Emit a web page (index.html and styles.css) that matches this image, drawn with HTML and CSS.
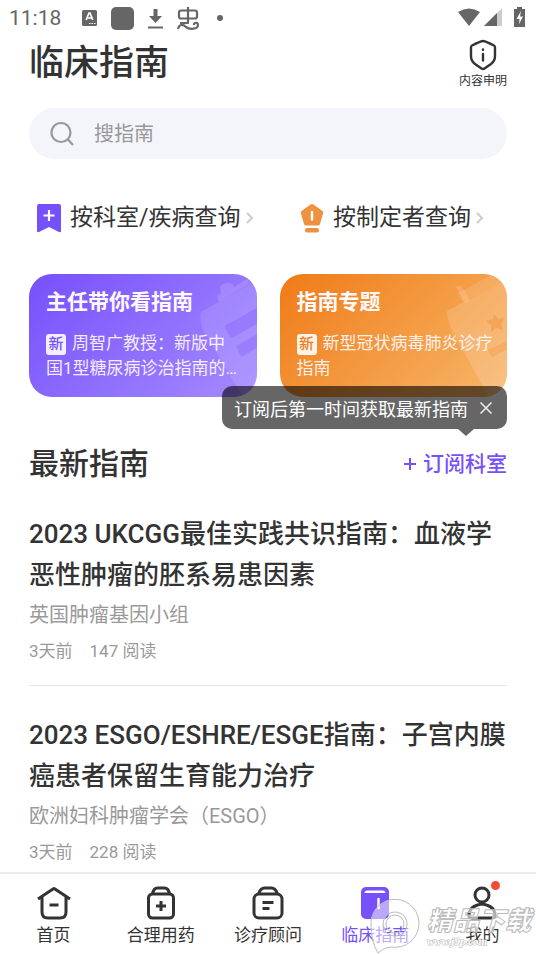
FILE: index.html
```html
<!DOCTYPE html>
<html lang="zh-CN">
<head>
<meta charset="utf-8">
<meta name="viewport" content="width=device-width, initial-scale=1">
<title>临床指南</title>
<link rel="stylesheet" href="styles.css">
</head>
<body>
<div class="app">
  <div class="status">
    <span class="clock">11:18</span>
    <svg class="status-left" width="144" height="24" viewBox="0 0 144 24">
      <rect x="1" y="4" width="15" height="16" rx="1.5" fill="#666"/>
      <path d="M5.200 14 8 7h1l2.800 7M6.200 12h4.500" fill="none" stroke="#fff" stroke-width="1.700"/>
      <path d="M8 17.500h1.500M10.500 17.500H12M13 17.500h1.500" stroke="#fff"/>
      <rect x="30" y="1" width="23" height="23" rx="5" fill="#666"/>
      <path d="M72.500 3h4v7h4.500l-6.500 7-6.500-7h4.500z" fill="#666"/>
      <path d="M67 21.500h15" stroke="#666" stroke-width="2"/>
      <path d="M100 4.500h14q2 0 2 2v4q0 2-2 2h-14q-2 0-2-2v-4q0-2 2-2zM107 1v16H99M97 23c1-5 5-5 8-2 4 3 12 2 12-2 0-3-4-3-4 0" fill="none" stroke="#666" stroke-width="2.200" stroke-linejoin="round"/>
      <circle cx="139" cy="12" r="3" fill="#666"/>
    </svg>
    <svg class="status-right" width="70" height="22" viewBox="0 0 70 22">
      <path d="M1 5Q12-2 23 5L12 19z" fill="#666"/>
      <path d="M45 1v18H27z" fill="#ccc"/><path d="M40 6v13H27z" fill="#666"/>
      <path d="M57 2h3V0h5v2h3v18H57z" fill="#666"/><path d="m64 4-4.500 8h3l-.500 5 4-7.500h-3z" fill="#fff"/>
    </svg>
  </div>
  <main class="content">
    <header class="head">
      <h1>临床指南</h1>
      <a class="notice" href="#notice">
        <svg width="28" height="32" viewBox="0 0 28 32" fill="none" stroke="#333" stroke-width="2.400" stroke-linejoin="round" stroke-linecap="round">
          <path d="M14 2Q16 2 25 6.500Q26 7 26 8.500V17Q26 22 22 25L15.500 29.500Q14 30.500 12.500 29.500L6 25Q2 22 2 17V8.500Q2 7 3 6.500Q12 2 14 2z"/>
          <path d="M14 15v6.500M14 10.500v.200"/>
        </svg>
        <span>内容申明</span>
      </a>
    </header>
    <label class="search">
      <svg width="26" height="26" viewBox="0 0 26 26" fill="none" stroke="#999" stroke-width="2.200"><circle cx="12" cy="11.500" r="9.500"/><path d="m18.500 18 5.500 6"/></svg>
      <input type="search" placeholder="搜指南" aria-label="搜指南">
    </label>
    <nav class="queries">
      <a href="#department">
        <svg width="26" height="30" viewBox="0 0 26 30"><path d="M3 1h20q2 0 2 2v25q0 2-2 1l-10-5-10 5q-2 1-2-1V3q0-2 2-2z" fill="#7650fb"/><path d="M13 7v11M7.500 12.500h11" stroke="#fff" stroke-width="2.200"/></svg>
        <span>按科室/疾病查询</span>
        <svg class="chevron" width="8" height="12" viewBox="0 0 8 12"><path d="m1 1 5 5-5 5"/></svg>
      </a>
      <a href="#author">
        <svg width="26" height="30" viewBox="0 0 26 30"><path d="M11.500 1.500q1.500-1 3 0L23.500 8q1 1 .700 2L21 21q-.300 1.500-2 1.500H7q-1.700 0-2-1.500L1.800 10q-.300-1 .700-2z" fill="#ee9140"/><path d="M13 9v7.500" stroke="#fff" stroke-width="2.400" stroke-linecap="round"/><rect x="6" y="25" width="14" height="4.500" rx="2" fill="#ee9140"/></svg>
        <span>按制定者查询</span>
        <svg class="chevron" width="8" height="12" viewBox="0 0 8 12"><path d="m1 1 5 5-5 5"/></svg>
      </a>
    </nav>
    <section class="cards">
      <a class="card purple" href="#director">
        <svg class="art" width="80" height="123" viewBox="0 0 80 123">
          <path d="M24 38 80 6v117H66L26 56q-4-12-2-18z" fill="#fff" opacity=".12"/>
          <path d="m40 22 4-3q-3-9 5-10 6-1 8 4l13-8 3 4-31 19z" fill="#fff" opacity=".14"/>
          <path d="m49 51 31-17v16L56 63q-2 1-3-1l-5-8q-1-2 1-3z" fill="#7650fb" opacity=".28"/>
          <path d="m61 71 19-11v14l-14 8q-2 1-3-1l-3-7q-1-2 1-3z" fill="#7650fb" opacity=".28"/>
        </svg>
        <h2>主任带你看指南</h2>
        <p><span class="tag">新</span>周智广教授：新版中国1型糖尿病诊治指南的…</p>
      </a>
      <a class="card orange" href="#topics">
        <svg class="art" width="80" height="123" viewBox="0 0 80 123">
          <path d="M20 37 80 5v118H62L24 55q-4-12-4-18z" fill="#fff" opacity=".16"/>
          <path d="M30 20 66 0h14v5L36 28z" fill="#fff" opacity=".12"/>
          <path d="m29 13 5-2 9 16-5 2z" fill="#fff" opacity=".15"/>
          <path d="m67 40 4 5 6-1-3 6 2 6-7-2-5 4v-7l-5-4 7-2z" fill="#ee7d1d" opacity=".3"/>
          <path d="m61 76 19-9v8l-14 8q-2 0-3-2z" fill="#ee7d1d" opacity=".2"/>
        </svg>
        <h2>指南专题</h2>
        <p><span class="tag">新</span>新型冠状病毒肺炎诊疗指南</p>
      </a>
    </section>
    <section class="latest">
      <div class="latest-head">
        <h2>最新指南</h2>
        <div class="subscribe">
          <div class="tip"><span>订阅后第一时间获取最新指南</span>
            <button type="button" aria-label="关闭"><svg width="14" height="14" viewBox="0 0 14 14"><path d="m1.500 1.500 11 11m0-11-11 11" stroke="#eee" stroke-width="1.500"/></svg></button>
          </div>
          <a href="#subscribe"><svg width="14" height="14" viewBox="0 0 14 14"><path d="M7 1v12M1 7h12" stroke="#7650fb" stroke-width="2"/></svg>订阅科室</a>
        </div>
      </div>
      <article>
        <h3>2023 UKCGG最佳实践共识指南：血液学恶性肿瘤的胚系易患因素</h3>
        <p class="org">英国肿瘤基因小组</p>
        <p class="meta"><span>3天前</span><span>147 阅读</span></p>
      </article>
      <article>
        <h3>2023 ESGO/ESHRE/ESGE指南：子宫内膜癌患者保留生育能力治疗</h3>
        <p class="org">欧洲妇科肿瘤学会（ESGO）</p>
        <p class="meta"><span>3天前</span><span>228 阅读</span></p>
      </article>
    </section>
  </main>
  <nav class="tabs">
    <a href="#home"><svg viewBox="0 0 36 36"><path d="M2 14 17 4q1-.700 2 0l15 10M6 12v15q0 6 6 6h12q6 0 6-6V12M13.500 20h9"/></svg><span>首页</span></a>
    <a href="#drugs"><svg viewBox="0 0 36 36"><rect x="5.500" y="9" width="25" height="24" rx="4"/><path d="M9.500 9q1-6 5-6h7q4 0 5 6M18 16v10M13 21h10"/></svg><span>合理用药</span></a>
    <a href="#consult"><svg viewBox="0 0 36 36"><rect x="4" y="9" width="28" height="24" rx="5"/><path d="M8.500 9q2-6 6-6h7q4 0 6 6M12.500 17.500h11M12.500 23.500h7"/></svg><span>诊疗顾问</span></a>
    <a class="active" href="#guides"><svg viewBox="0 0 36 36"><rect x="4" y="2" width="28" height="32" rx="5" fill="#7650fb" stroke="none"/><path d="M7.500 8q0-2.500 3-2.500h15q3 0 3 2.500z" fill="#fff" stroke="none"/><path d="M21.500 14v9" stroke="#fff" stroke-width="2.500" stroke-linecap="round"/></svg><span>临床指南</span></a>
    <a href="#mine"><svg viewBox="0 0 36 36"><circle cx="18" cy="10" r="7"/><path d="M5 32q-1-11 13-13 14 2 13 13-1 1-3 1H8q-2 0-3-1z"/></svg><i class="dot"></i><span>我的</span></a>
  </nav>
  <div class="watermark">
    <svg width="52" height="56" viewBox="0 0 52 56"><path fill-rule="evenodd" d="M9 55Q2 44 2 26A24 24 0 1 1 22 49Q15 49 9 55zM26 14a12 12 0 1 0 .1 0z" fill="#fff" fill-opacity=".5" stroke="#bbb"/><circle cx="26" cy="26" r="9" fill="none" stroke="#bbb"/></svg>
    <div><b>精品下载</b><small>www.j9p.com</small></div>
  </div>
</div>
</body>
</html>
```
FILE: styles.css
```css
* { box-sizing: border-box; }
body {
  margin: 0;
  background: #fff;
  color: #333;
  font-family: Roboto, "Noto Sans CJK SC", sans-serif;
}
h1, h2, h3, p { margin: 0; }
a { color: inherit; text-decoration: none; }
svg { display: block; flex: none; }
.app {
  position: relative;
  display: flex;
  flex-direction: column;
  height: 100vh;
  overflow: hidden;
}
.status {
  display: flex;
  align-items: center;
  height: 36px;
  padding: 0 9px;
  color: #666;
  flex: none;
}
.clock { font-size: 21px; }
.status-left { margin-left: 20px; }
.status-right { margin-left: auto; }
.content {
  flex: 1;
  min-height: 0;
  overflow: hidden;
  padding: 0 29px;
}
.head {
  display: flex;
  justify-content: space-between;
  align-items: flex-start;
  height: 72px;
}
h1 { font-size: 35px; line-height: 56px; font-weight: 500; }
.notice {
  display: flex;
  flex-direction: column;
  align-items: center;
  gap: 2px;
  padding-top: 3px;
  font-size: 12px;
  line-height: 17px;
}
.search {
  display: flex;
  align-items: center;
  gap: 19px;
  height: 51px;
  padding: 0 20px;
  border-radius: 26px;
  background: #f4f5fa;
}
.search input {
  flex: 1;
  min-width: 0;
  padding: 0;
  border: 0;
  outline: 0;
  background: none;
  font: inherit;
  font-size: 20px;
}
.search input::placeholder { color: #999; opacity: 1; }
.queries {
  display: grid;
  grid-template-columns: 55fr 45fr;
  padding: 41px 0 38px;
}
.queries a {
  display: flex;
  align-items: center;
  gap: 8px;
  padding-left: 7px;
  font-size: 23px;
  line-height: 36px;
  white-space: nowrap;
}
.chevron { fill: none; stroke: #ccc; stroke-width: 2; margin-left: -3px; }
.cards {
  display: grid;
  grid-template-columns: 1fr 1fr;
  gap: 23px;
}
.card {
  position: relative;
  overflow: hidden;
  height: 123px;
  padding: 12px 14px 12px 17px;
  border-radius: 23px;
  color: #fffaff;
}
.purple { padding-right: 17px; background: linear-gradient(135deg, #7650fc, #a58bff); }
.orange { background: linear-gradient(135deg, #ef7b16, #f8b76b); }
.art { position: absolute; right: 0; top: 0; }
.card h2 { position: relative; font-size: 21px; line-height: 32px; font-weight: 700; }
.card p {
  position: relative;
  margin-top: 13px;
  font-size: 17px;
  line-height: 25px;
  opacity: .9;
}
.tag {
  display: inline-block;
  width: 20px;
  margin-right: 6px;
  border-radius: 3px;
  background: #fff;
  color: #7650fb;
  font-size: 15px;
  line-height: 21px;
  font-weight: 500;
  text-align: center;
}
.orange .tag { color: #ee7d1d; }
.latest-head {
  display: flex;
  justify-content: space-between;
  align-items: center;
  height: 44px;
  margin-top: 45px;
}
.latest-head h2 { font-size: 30px; line-height: 42px; font-weight: 500; }
.subscribe { position: relative; }
.subscribe > a {
  display: flex;
  align-items: center;
  gap: 6px;
  color: #7650fb;
  font-size: 21px;
  line-height: 30px;
  font-weight: 500;
}
.tip {
  position: absolute;
  right: 0;
  bottom: 50px;
  display: flex;
  align-items: center;
  gap: 11px;
  height: 43px;
  padding: 0 14px 0 12px;
  border-radius: 10px;
  background: rgba(0, 0, 0, .6);
  color: #fff;
  font-size: 18px;
  white-space: nowrap;
}
.tip::after {
  content: "";
  position: absolute;
  top: 100%;
  right: 33px;
  border: 8px solid transparent;
  border-top: 7px solid rgba(0, 0, 0, .6);
  border-bottom: 0;
}
.tip button { padding: 0; border: 0; background: none; }
article { padding: 28px 0 22px; border-bottom: 1px solid #e6e6e6; }
article + article { padding-top: 29px; }
article h3 { font-size: 26px; line-height: 41px; font-weight: 500; }
.org { margin-top: 3px; color: #999; font-size: 20px; line-height: 32px; }
.meta {
  display: flex;
  gap: 17px;
  margin-top: 8px;
  color: #999;
  font-size: 17px;
  line-height: 24px;
}
.tabs {
  display: grid;
  grid-template-columns: repeat(5, 1fr);
  flex: none;
  height: 82px;
  padding-top: 11px;
  border-top: 2px solid #ececec;
  background: #fff;
}
.tabs a {
  position: relative;
  display: flex;
  flex-direction: column;
  align-items: center;
  font-size: 17px;
  line-height: 28px;
}
.tabs svg {
  width: 36px;
  height: 36px;
  fill: none;
  stroke: #333;
  stroke-width: 3;
}
.tabs .active { color: #7650fb; }
.dot {
  position: absolute;
  top: -4px;
  left: calc(50% + 9px);
  width: 9px;
  height: 9px;
  border-radius: 50%;
  background: #f64a34;
}
.watermark {
  position: absolute;
  right: 5px;
  bottom: 0;
  display: flex;
  align-items: flex-start;
  gap: 6px;
  pointer-events: none;
  font-style: italic;
  color: rgba(255, 255, 255, .6);
  -webkit-text-stroke: 1px #bbb;
}
.watermark div { display: flex; flex-direction: column; padding-top: 8px; }
.watermark b { font-size: 26px; line-height: 30px; font-weight: 900; }
.watermark small {
  font-family: "Liberation Serif", serif;
  font-size: 11px;
  line-height: 10px;
  font-weight: 700;
  color: #fff;
  -webkit-text-stroke: 1px #bbb;
  paint-order: stroke fill;
}
```
